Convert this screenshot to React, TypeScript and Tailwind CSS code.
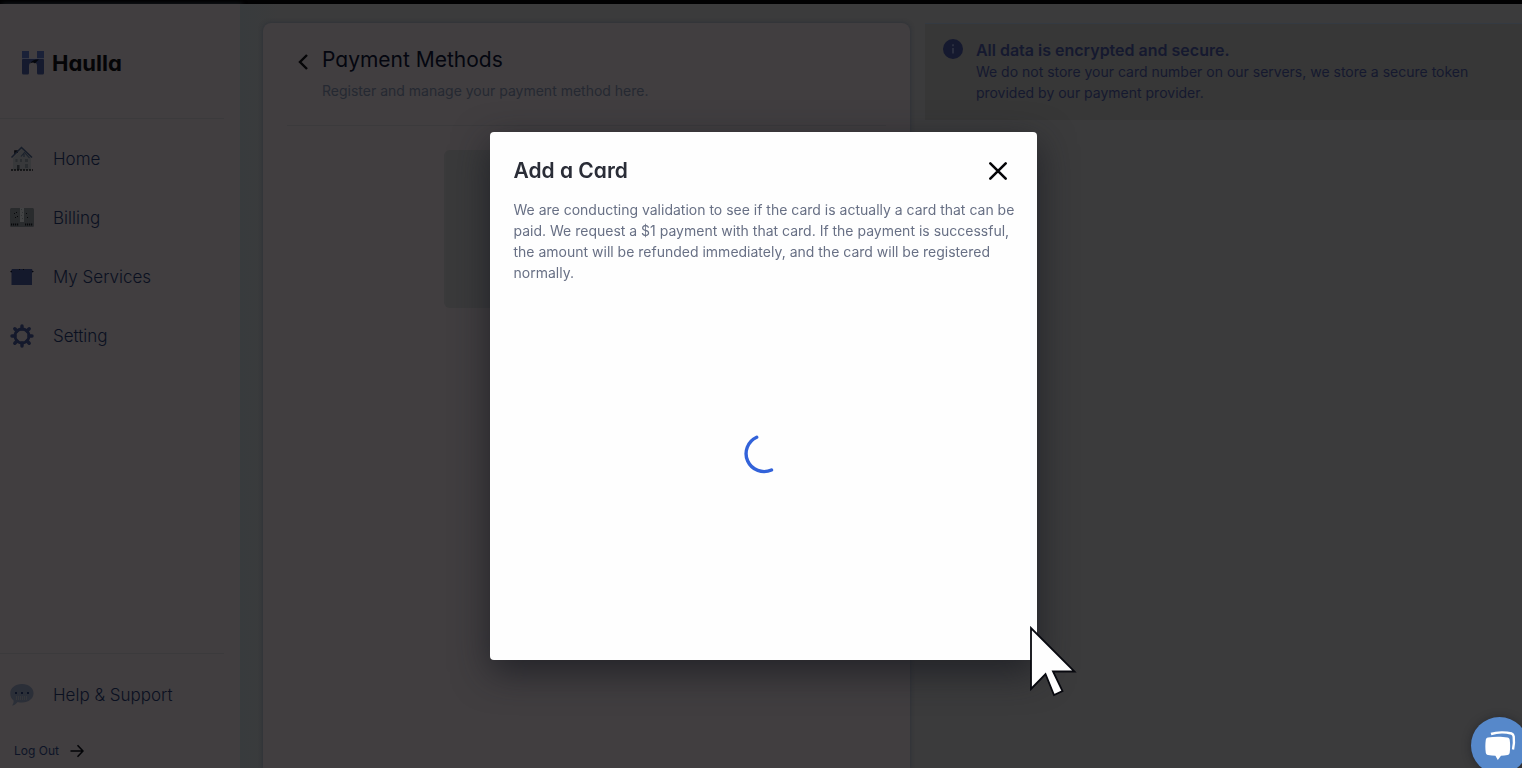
import type { ReactNode } from "react";

const geo = "font-['Inter',sans-serif] [font-feature-settings:'cv11']";

function HomeIcon() {
  return (
    <svg viewBox="0 0 24 26" className="h-[26px] w-6" fill="none" aria-hidden="true">
      <path d="M3 12v12h18V12l-9-9z" fill="#38393b" />
      <path d="M5 8V5h2v2" stroke="#08090d" strokeWidth="1.6" />
      <path d="M1.500 11.500 11.500 1.500 22 11.500" stroke="#161d29" strokeWidth="1.500" />
      <path d="m11 10.500 3.500-4 5 5.500M14 8v3" stroke="#1b222d" strokeWidth="1.100" />
      <path d="M5.500 13h2v3h-2zM10 13h2v3h-2zM15 13h3v3h-3zM15 18h3v4h-3z" fill="#2a2d30" />
      <path d="M7 19h2.500v5H7z" fill="#1b1d20" />
      <path d="M1 24h22" stroke="#0b0c0e" strokeWidth="1.500" strokeDasharray="2 1" />
    </svg>
  );
}

function BillingIcon() {
  return (
    <svg viewBox="0 0 24 20" className="h-5 w-6" aria-hidden="true">
      <rect width="24" height="19" rx="1.500" fill="#292b2d" />
      <rect x="10" width="4" height="14" fill="#424344" />
      <path d="M11 1h1v1h-1zM12 4h1v1h-1zM11 7h1v1h-1zM12 10h1v1h-1z" fill="#303234" />
      <path d="M4 5h1v1H4zM6 4h1v1H6zM5 9h1v1H5zM7 8h1v1H7zM16 5h1v1h-1zM17 9h1v1h-1z" fill="#08090b" />
      <path d="M1 16.500h8M15 16.500h8" stroke="#08090b" strokeWidth="2" strokeDasharray="1.200 .8" />
    </svg>
  );
}

function ServicesIcon() {
  return (
    <svg viewBox="0 0 24 18" className="h-[18px] w-6" aria-hidden="true">
      <path d="M2 1h20l1 3-1 1v12H1.500V5L.5 4z" fill="#14192c" />
      <path d="M.5 3.500H2M22 3.500h1.500M9 1.500h1M13 1.500h1" stroke="#06070c" strokeWidth="1.200" />
    </svg>
  );
}

function GearIcon() {
  return (
    <svg viewBox="0 0 24 24" className="size-6" fill="none" stroke="#14192c" aria-hidden="true">
      <circle cx="12" cy="12" r="7" strokeWidth="2.800" />
      <path
        d="M12 2v3M12 19v3M2 12h3M19 12h3M4.800 4.800 7 7M17 17l2.200 2.200M4.800 19.200 7 17M17 7l2.200-2.200"
        strokeWidth="3.400"
        strokeLinecap="round"
      />
    </svg>
  );
}

function ChatIcon() {
  return (
    <svg viewBox="0 0 24 22" className="h-[22px] w-6" aria-hidden="true">
      <path d="M12 0c6.600 0 11.500 4 11.500 9.200S18.600 18.500 12 18.500c-1.600 0-3-.2-4.400-.6-1.500 2-3.600 3.300-5.400 3.600 1-1.300 1.600-3 1.400-4.900C1.400 14.900.3 12.300.3 9.300.3 4 5.400 0 12 0z" fill="#2b2f38" />
      <path d="M6 14h11" stroke="#3a3a3b" strokeWidth="4" strokeDasharray="1 1" opacity=".7" />
      <path d="M5 8h2v2H5zM11 8h2v2h-2zM17 8h2v2h-2z" fill="#0d1324" />
    </svg>
  );
}

function Logo() {
  return (
    <a href="#" className="flex items-center gap-[7px]">
      <svg viewBox="0 0 24 26" className="h-[26px] w-6" aria-hidden="true">
        <path d="M1 1h7v8H1zM16 1h7v8h-7z" fill="#1a2138" />
        <path d="M2 9h20a1 1 0 0 1 1 1v13a1.500 1.500 0 0 1-1.500 1.500h-4A1.500 1.500 0 0 1 16 23v-7a4 4 0 0 0-8 0v7a1.500 1.500 0 0 1-1.500 1.500h-4A1.500 1.500 0 0 1 1 23V10a1 1 0 0 1 1-1z" fill="#151a2e" />
        <path d="M9 13.500c2-3.500 5-4.300 9-4-1 1-3 2.500-4 4-1.500-1.500-3-1-5 0z" fill="#05070c" />
        <path d="M1 8.500h22" stroke="#3b3d48" strokeWidth=".8" />
      </svg>
      <span className={`${geo} text-[22px] leading-7 font-bold text-[#050507]`}>Haulla</span>
    </a>
  );
}

function NavItem({ icon, children }: { icon: ReactNode; children: ReactNode }) {
  return (
    <li>
      <a href="#" className="flex h-[26px] items-center gap-[19px] pl-[10px]">
        <span className="flex w-6 justify-center">{icon}</span>
        <span className={`${geo} text-[17px] leading-6 font-light text-[#0a1020]`}>{children}</span>
      </a>
    </li>
  );
}

function Sidebar() {
  return (
    <aside className="flex w-60 shrink-0 flex-col bg-[#413e40] shadow-[2px_0_5px_rgba(38,44,50,0.7)]">
      <div className="mr-4 flex h-[115px] items-center border-b border-[#3b3a3c] pt-1 pl-[21px]">
        <Logo />
      </div>
      <nav className="pt-[27px]">
        <ul className="flex flex-col gap-[33px]">
          <NavItem icon={<HomeIcon />}>Home</NavItem>
          <NavItem icon={<BillingIcon />}>Billing</NavItem>
          <NavItem icon={<ServicesIcon />}>My Services</NavItem>
          <NavItem icon={<GearIcon />}>Setting</NavItem>
        </ul>
      </nav>
      <div className="mt-auto">
        <div className="mr-4 border-t border-[#3b3a3c]" />
        <ul className="pt-7">
          <NavItem icon={<ChatIcon />}>Help &amp; Support</NavItem>
        </ul>
        <button type="button" className="mt-7 flex h-8 items-center gap-[11px] pb-0.5 pl-[14px]">
          <span className={`${geo} text-xs leading-5 text-[#0d1427]`}>Log Out</span>
          <svg viewBox="0 0 14 14" className="size-[14px]" fill="none" stroke="#030407" strokeWidth="1.600" aria-hidden="true">
            <path d="M.5 7H13M7.500 1.300 13 7l-5.500 5.700" />
          </svg>
        </button>
      </div>
    </aside>
  );
}

function PaymentPanel() {
  return (
    <section className="rounded-t-lg bg-[#413e40] px-6 pt-[23px] shadow-[0_0_4px_rgba(38,44,52,0.8)]">
      <header className="flex gap-[13px] border-b border-[#3b3a3c] pb-6 pl-[9px]">
        <button type="button" aria-label="Back" className="mt-1 flex h-6 w-[13px] items-center justify-center">
          <svg viewBox="0 0 12 16" className="h-4 w-3" fill="none" stroke="#050507" strokeWidth="2.400" aria-hidden="true">
            <path d="M10 1 3 8l7 7" />
          </svg>
        </button>
        <div>
          <h1 className={`${geo} text-[21px] leading-7 text-[#04060f]`}>Payment Methods</h1>
          <p className="mt-[7px] text-sm leading-5 text-[#252932]">Register and manage your payment method here.</p>
        </div>
      </header>
      <div className="mx-auto mt-6 h-[158px] w-[284px] rounded-md bg-[#3a3a3b]" />
    </section>
  );
}

function SecurityNotice() {
  return (
    <section className="flex gap-[13px] self-start border-t border-[#343a42] bg-[#373737] pt-[15px] pr-8 pb-[17px] pl-[18px] text-[#15192f]">
      <svg viewBox="0 0 20 20" className="size-5 shrink-0" aria-hidden="true">
        <circle cx="10" cy="10" r="10" fill="#15192f" />
        <path d="M10 9v5.500M10 5.300v2" stroke="#343847" strokeWidth="1.400" />
      </svg>
      <div>
        <h2 className="text-base leading-[22px] font-semibold">All data is encrypted and secure.</h2>
        <p className="text-sm leading-[21px]">
          We do not store your card number on our servers, we store a secure token provided by our payment provider.
        </p>
      </div>
    </section>
  );
}

function AddCardDialog() {
  return (
    <div className="fixed inset-0 flex items-center justify-center pt-[23px] pl-1">
      <div
        role="dialog"
        aria-modal="true"
        aria-labelledby="add-card-title"
        className="flex min-h-[528px] w-[547px] flex-col rounded bg-[#fefefe] pt-[23px] pr-4 pb-8 pl-6 shadow-[0_12px_36px_rgba(24,26,32,0.75)]"
      >
        <div className="flex h-8 items-center justify-between pr-[11px]">
          <h2 id="add-card-title" className={`${geo} text-[21px] leading-8 font-semibold text-[#2a2d37]`}>
            Add a Card
          </h2>
          <button type="button" aria-label="Close" className="flex size-6 items-center justify-center">
            <svg viewBox="0 0 20 20" className="size-5" stroke="#050508" strokeWidth="2.600" strokeLinecap="round" aria-hidden="true">
              <path d="m2.300 2.300 15.400 15.400M17.700 2.300 2.300 17.700" />
            </svg>
          </button>
        </div>
        <p className="mt-3 text-sm leading-[21px] text-[#687085]">
          We are conducting validation to see if the card is actually a card that can be paid. We request a $1 payment
          with that card. If the payment is successful, the amount will be refunded immediately, and the card will be
          registered normally.
        </p>
        <div role="status" aria-label="Loading" className="flex flex-1 items-center justify-center pr-2">
          <svg viewBox="0 0 40 40" className="size-10" fill="none" stroke="#3262d9" strokeWidth="3.400" strokeLinecap="round" aria-hidden="true">
            <path d="M13.700 2.200A17.600 17.600 0 1 0 28.500 35" />
          </svg>
        </div>
      </div>
    </div>
  );
}

export default function App() {
  return (
    <div className="flex min-h-screen flex-col overflow-hidden bg-[#3b3b3c] font-['Inter',sans-serif]">
      <div className="h-1 bg-[#010102]" />
      <div className="flex flex-1">
        <Sidebar />
        <main className="grid flex-1 grid-cols-[13fr_12fr] gap-[15px] bg-linear-to-r from-[#383b3d] from-0% to-[#3b3b3c] to-3% pt-[19px] pl-[23px]">
          <PaymentPanel />
          <SecurityNotice />
        </main>
      </div>
      <AddCardDialog />
      <button
        type="button"
        aria-label="Open chat"
        className="fixed -right-1.5 -bottom-1.5 flex size-[57px] items-center justify-center rounded-full bg-[#5688ca] shadow-[0_1px_8px_rgba(20,22,30,0.5)]"
      >
        <svg viewBox="0 0 32 30" className="h-[30px] w-8" aria-hidden="true">
          <path d="M7 3c6-2 15-2 20.500-.5 1.500.5 2 1.500 2.200 3 .5 4 .3 9-.7 13" fill="none" stroke="#fff" strokeWidth="2.400" />
          <path d="M4 6.500c6-1 14-1 19.500 0 1.300.3 2 1 2.200 2.300.6 4.200.6 9 0 13-.2 1.300-.9 2-2.200 2.200-2 .4-4.500.6-6.500.7L13.800 29l-2.400-4.300c-2.500-.1-5-.3-7.400-.7-1.300-.2-2-.9-2.200-2.200-.6-4-.6-8.800 0-13C2 7.500 2.700 6.800 4 6.500z" fill="#fff" />
        </svg>
      </button>
      <svg viewBox="0 0 48 72" className="pointer-events-none fixed top-[626px] left-[1029px] h-[72px] w-12" aria-hidden="true">
        <path d="M2 2v61l14.500-15L25 69l8.500-4L24 45.500h21.500z" fill="#fefefe" stroke="#08090f" strokeWidth="1.800" />
      </svg>
    </div>
  );
}
